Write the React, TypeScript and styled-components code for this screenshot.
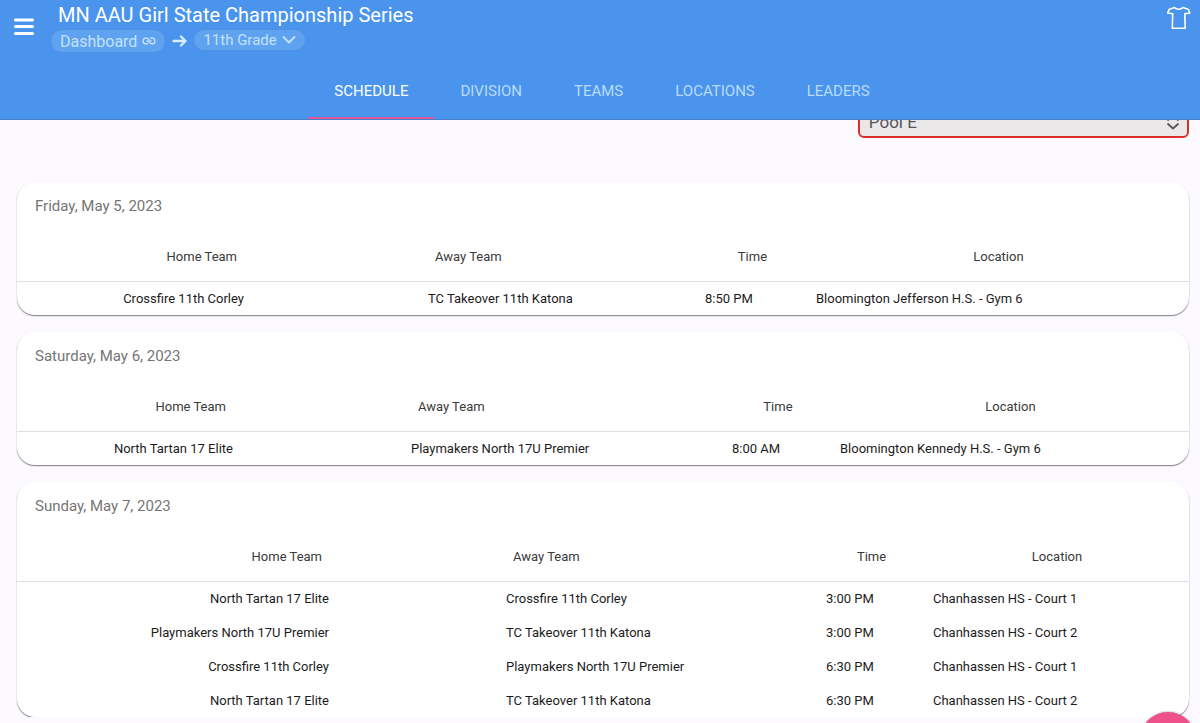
import React from "react";
import styled, { createGlobalStyle } from "styled-components";

const GlobalStyle = createGlobalStyle`
  *, *::before, *::after { box-sizing: border-box; }
  body {
    margin: 0;
    background: #fcfafe;
    font-family: Roboto, "Liberation Sans", sans-serif;
    color: #1c1c1c;
  }
`;

const Header = styled.header`
  position: fixed;
  inset: 0 0 auto 0;
  z-index: 2;
  display: flex;
  flex-direction: column;
  background: #4a94ed;
  border-bottom: 1px solid #4681c8;
`;

const TopBar = styled.div`
  display: flex;
  align-items: flex-start;
  height: 64px;
  padding: 3px 9px 0 12px;
`;

const IconButton = styled.button`
  display: flex;
  flex: none;
  padding: 0;
  border: 0;
  background: none;
  color: #fff;
  cursor: pointer;
`;

const MenuButton = styled(IconButton)`
  margin-top: 12px;
`;

const Heading = styled.div`
  flex: 1;
  padding-left: 14px;
`;

const Title = styled.h1`
  margin: 0;
  padding-left: 8px;
  font-size: 20px;
  line-height: 24px;
  font-weight: 400;
  color: #fff;
`;

const Crumbs = styled.nav`
  display: flex;
  align-items: flex-start;
  gap: 6px;
  margin-top: 2px;
  color: #d8edfe;
`;

const chip = `
  display: flex;
  align-items: center;
  gap: 5px;
  padding: 0 9px;
  border: 1px solid #4f90e2;
  border-radius: 12px;
  background: #5fa3f0;
  color: #c3e1fc;
  font-family: inherit;
`;

const LinkChip = styled.a`
  ${chip}
  height: 24px;
  font-size: 16px;
  text-decoration: none;
`;

const MenuChip = styled.button`
  ${chip}
  height: 22px;
  font-size: 15px;
  cursor: pointer;
`;

const Tabs = styled.nav`
  display: flex;
  justify-content: center;
  height: 55px;
  padding-left: 4px;
`;

const Tab = styled.a<{ $active?: boolean }>`
  display: flex;
  align-items: center;
  padding: 1px 26px 0;
  border-bottom: 2px solid ${(p) => (p.$active ? "#e0569a" : "transparent")};
  color: ${(p) => (p.$active ? "#fff" : "#b9dbfb")};
  font-size: 15px;
  text-decoration: none;
`;

const Main = styled.main`
  display: flex;
  flex-direction: column;
  gap: 17px;
  padding: 106px 11px 0 17px;
`;

const Filter = styled.div`
  position: relative;
  align-self: flex-end;
  width: calc(28% + 3px);
  min-width: 240px;
  margin-bottom: 27px;
  color: #55545a;

  svg {
    position: absolute;
    top: 8px;
    right: 9px;
    pointer-events: none;
  }
`;

const Select = styled.select`
  display: block;
  width: 100%;
  height: 32px;
  padding: 0 9px;
  appearance: none;
  border: 2px solid #d9302c;
  border-radius: 6px;
  background: #ebe8ea;
  color: inherit;
  font: 17px Roboto, "Liberation Sans", sans-serif;
`;

const Card = styled.section`
  overflow: hidden;
  border-radius: 18px;
  background: #fff;
  box-shadow: 0 1px 1px rgba(0, 0, 0, 0.4), 0 1px 2px rgba(0, 0, 0, 0.15);
`;

const DateTitle = styled.h2`
  margin: 0;
  padding: 14px 18px 0;
  font-size: 15px;
  line-height: 20px;
  font-weight: 400;
  color: #757575;
`;

const Table = styled.table`
  width: 100%;
  table-layout: fixed;
  border-collapse: collapse;
  font-size: 13px;
`;

const HeadCell = styled.th<{ $align?: string }>`
  height: 65px;
  padding: 17px 15px 0;
  border-bottom: 1px solid #e0e0e0;
  color: #3a3a3a;
  font-weight: 400;
  text-align: ${(p) => p.$align || "center"};
`;

const Cell = styled.td<{ $align?: string }>`
  height: 34px;
  padding: 1px 8px 0;
  text-align: ${(p) => p.$align || "left"};
`;

const Fab = styled.button`
  position: fixed;
  right: 4px;
  bottom: -45px;
  z-index: 1;
  width: 56px;
  height: 56px;
  border: 0;
  border-radius: 50%;
  background: #f0508a;
  box-shadow: 0 0 2px rgba(0, 0, 0, 0.5);
  cursor: pointer;
`;

type Game = { home: string; away: string; time: string; location: string };
type Day = { date: string; columns: number[]; games: Game[] };

const days: Day[] = [
  {
    date: "Friday, May 5, 2023",
    columns: [235, 168, 277, 111, 381],
    games: [
      {
        home: "Crossfire 11th Corley",
        away: "TC Takeover 11th Katona",
        time: "8:50 PM",
        location: "Bloomington Jefferson H.S. - Gym 6",
      },
    ],
  },
  {
    date: "Saturday, May 6, 2023",
    columns: [224, 162, 321, 108, 357],
    games: [
      {
        home: "North Tartan 17 Elite",
        away: "Playmakers North 17U Premier",
        time: "8:00 AM",
        location: "Bloomington Kennedy H.S. - Gym 6",
      },
    ],
  },
  {
    date: "Sunday, May 7, 2023",
    columns: [320, 161, 320, 107, 264],
    games: [
      { home: "North Tartan 17 Elite", away: "Crossfire 11th Corley", time: "3:00 PM", location: "Chanhassen HS - Court 1" },
      { home: "Playmakers North 17U Premier", away: "TC Takeover 11th Katona", time: "3:00 PM", location: "Chanhassen HS - Court 2" },
      { home: "Crossfire 11th Corley", away: "Playmakers North 17U Premier", time: "6:30 PM", location: "Chanhassen HS - Court 1" },
      { home: "North Tartan 17 Elite", away: "TC Takeover 11th Katona", time: "6:30 PM", location: "Chanhassen HS - Court 2" },
    ],
  },
];

const tabs = ["SCHEDULE", "DIVISION", "TEAMS", "LOCATIONS", "LEADERS"];

const stroke = {
  fill: "none",
  stroke: "currentColor",
  strokeLinecap: "round" as const,
  strokeLinejoin: "round" as const,
};

function DayCard({ date, columns, games }: Day) {
  const total = columns.reduce((sum, n) => sum + n, 0);
  return (
    <Card>
      <DateTitle>{date}</DateTitle>
      <Table aria-label={date}>
        <colgroup>
          {columns.map((n, i) => (
            <col key={i} style={{ width: `${(n / total) * 100}%` }} />
          ))}
        </colgroup>
        <thead>
          <tr>
            <HeadCell $align="right">Home Team</HeadCell>
            <HeadCell />
            <HeadCell $align="left">Away Team</HeadCell>
            <HeadCell>Time</HeadCell>
            <HeadCell>Location</HeadCell>
          </tr>
        </thead>
        <tbody>
          {games.map((g, i) => (
            <tr key={i}>
              <Cell $align="right">{g.home}</Cell>
              <Cell />
              <Cell>{g.away}</Cell>
              <Cell>{g.time}</Cell>
              <Cell>{g.location}</Cell>
            </tr>
          ))}
        </tbody>
      </Table>
    </Card>
  );
}

export default function App() {
  return (
    <>
      <GlobalStyle />
      <Header>
        <TopBar>
          <MenuButton aria-label="Menu">
            <svg width="24" height="24" viewBox="0 0 24 24" {...stroke} strokeWidth="3.2">
              <path d="M3.5 5h17M3.5 11.500h17M3.5 18.500h17" />
            </svg>
          </MenuButton>
          <Heading>
            <Title>MN AAU Girl State Championship Series</Title>
            <Crumbs aria-label="Breadcrumb">
              <LinkChip href="#dashboard">
                Dashboard
                <svg width="14" height="10" viewBox="0 0 14 10" {...stroke} strokeWidth="1.4">
                  <path d="M5.500 7.800H4A2.900 2.900 0 0 1 4 2c2.600 0 3 3 5 3M8.500 2H10a2.900 2.900 0 0 1 0 5.800C7.400 7.800 7 5 5 5" />
                </svg>
              </LinkChip>
              <svg width="15" height="24" viewBox="0 0 15 24" {...stroke} strokeWidth="2.3">
                <path d="M1.5 12h12M9 7.500 13.500 12 9 16.500" />
              </svg>
              <MenuChip>
                11th Grade
                <svg width="14" height="10" viewBox="0 0 14 10" {...stroke} strokeWidth="2">
                  <path d="m1.500 2 5.500 5.500L12.500 2" />
                </svg>
              </MenuChip>
            </Crumbs>
          </Heading>
          <IconButton aria-label="Jersey">
            <svg width="25" height="28" viewBox="0 0 25 28" {...stroke} strokeWidth="1.6">
              <path d="M8.500 4.500 3 6.500 1.700 10 6.700 10.800 6.300 25.300H19.200L18.800 10.800 23.800 10 22.500 6.500 17 4.500C15 6.800 10.500 6.800 8.500 4.500Z" />
            </svg>
          </IconButton>
        </TopBar>
        <Tabs aria-label="Sections">
          {tabs.map((t, i) => (
            <Tab key={t} href={`#${t.toLowerCase()}`} $active={i === 0}>
              {t}
            </Tab>
          ))}
        </Tabs>
      </Header>
      <Main>
        <Filter>
          <Select aria-label="Pool" defaultValue="Pool E">
            <option>Pool E</option>
          </Select>
          <svg width="14" height="16" viewBox="0 0 14 16" {...stroke} strokeWidth="1.8">
            <path d="M2 6l5-4.500L12 6M2 10l5 4.500L12 10" />
          </svg>
        </Filter>
        {days.map((d) => (
          <DayCard key={d.date} {...d} />
        ))}
      </Main>
      <Fab aria-label="Open actions" />
    </>
  );
}
